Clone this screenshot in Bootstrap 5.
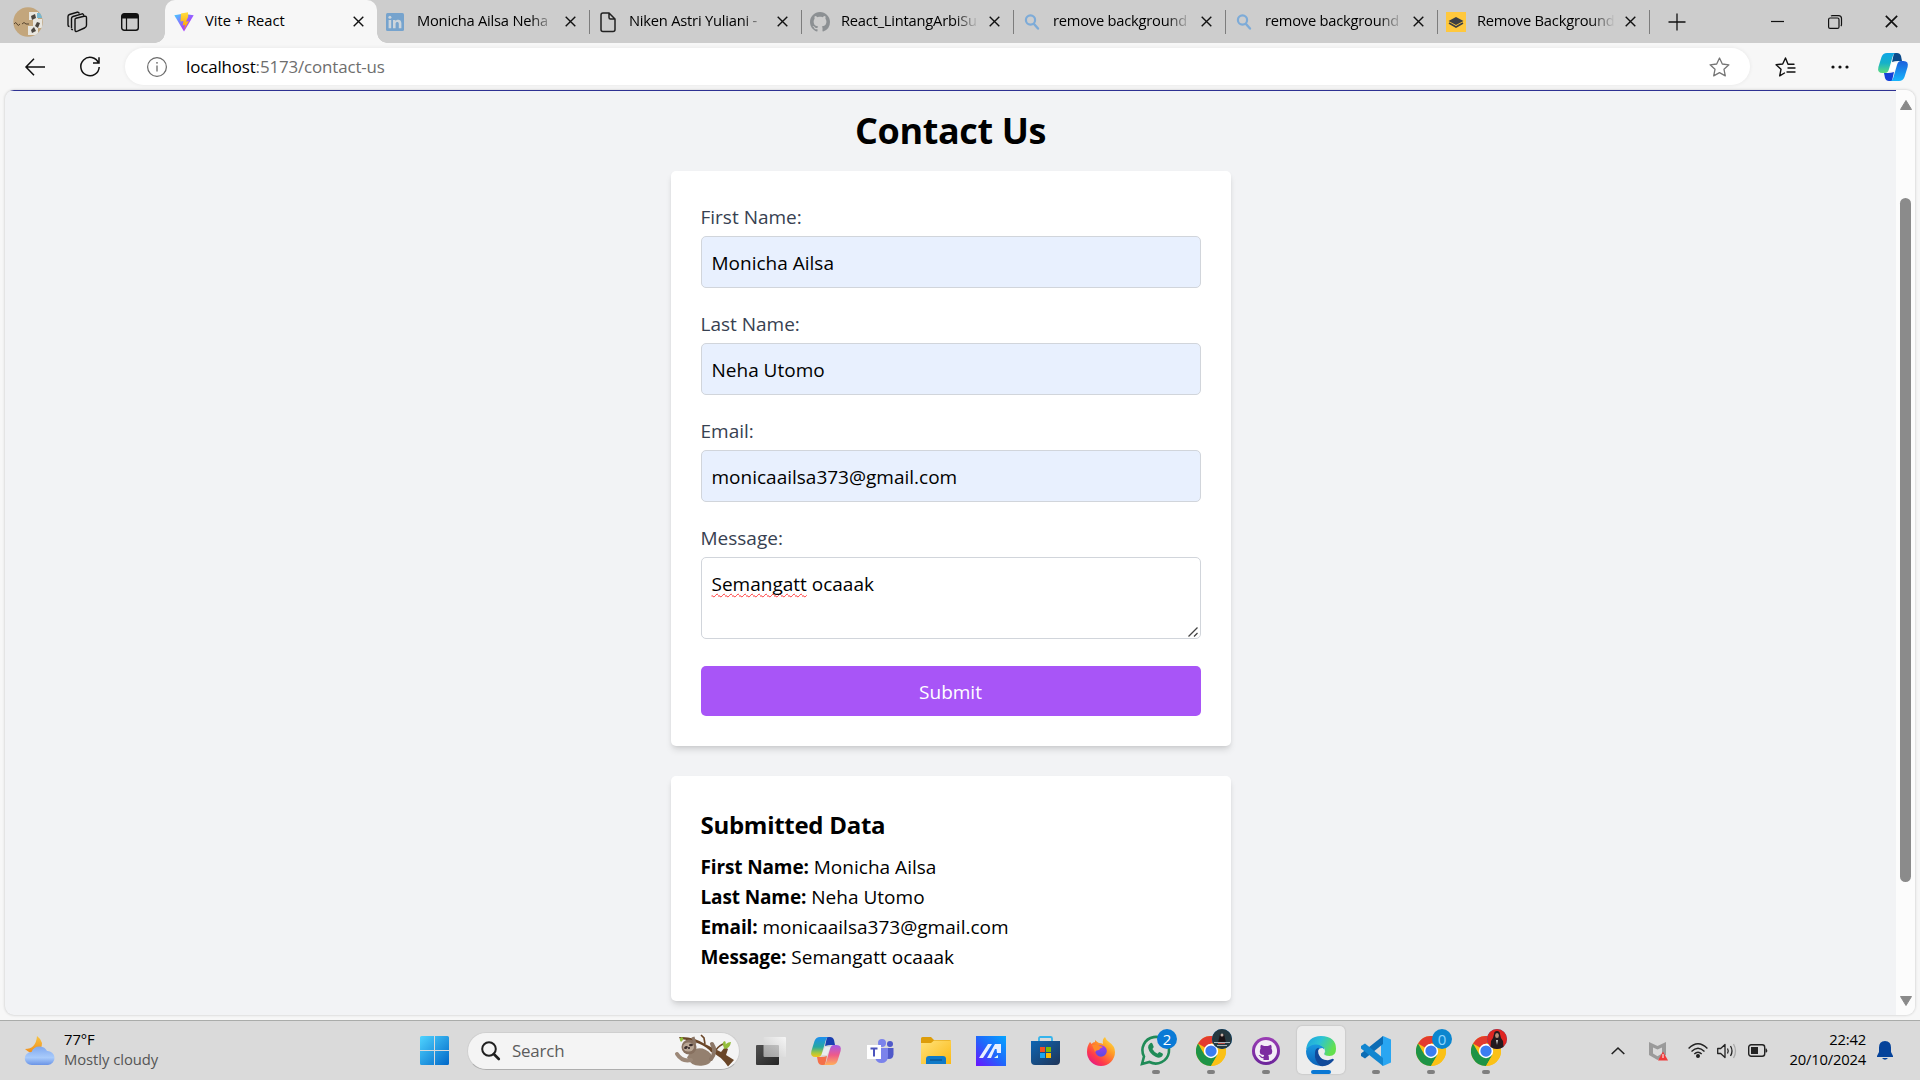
<!DOCTYPE html>
<html lang="en">
<head>
<meta charset="utf-8">
<title>Vite + React</title>
<link href="https://cdn.jsdelivr.net/npm/bootstrap@5.3.0/dist/css/bootstrap.min.css" rel="stylesheet">
<style>
html,body{height:100%;overflow:hidden}
body{width:1920px;height:1080px;background:#f7f7f7;font-family:"Open Sans","Noto Sans",sans-serif;color:#000}
svg{display:block;flex:none;overflow:visible}
.slot{flex:none;display:flex;align-items:center;justify-content:center;position:relative}
.w18{width:18px}.w38{width:38px}.w40{width:40px}.w44{width:44px}.w48{width:48px}.w50{width:50px}.w54{width:54px}.w56{width:56px}.w57{width:57px}.w70{width:70px}
/* tab strip */
.tabstrip{height:43px;background:#cdcdcd;padding-left:3px}
.tabx{width:212px;padding-left:9px;position:relative;flex:none;height:43px}
.tabx .fav{width:20px;margin-right:11px;flex:none}
.tabx .ttl{width:138px;flex:none;overflow:hidden;white-space:nowrap;font-size:14.7px;line-height:22px;letter-spacing:-.22px;margin-top:-4px;-webkit-mask-image:linear-gradient(90deg,#000 82%,transparent 100%)}
.tabx .cls{width:11px;margin-left:10px}
.tabx.live{background:#f7f7f7;border-radius:10px 10px 0 0;margin-left:7px}
.tabx.live .ttl{-webkit-mask-image:none;letter-spacing:0}
.tabx:not(.live):after{content:"";position:absolute;right:-1px;top:10px;height:24px;width:1px;background:#7d7d7d}
.tabx.live:before,.tabx.live + .tabx:before{content:"";position:absolute;bottom:0;width:10px;height:10px;background:radial-gradient(circle at 0 0,transparent 9.5px,#f7f7f7 10px)}
.tabx.live:before{left:-10px}
.tabx.live + .tabx:before{left:0;background:radial-gradient(circle at 100% 0,transparent 9.5px,#f7f7f7 10px)}
/* toolbar */
.toolbar{height:47px;padding-left:7px}
.omni{width:1625px;flex:none;height:37px;border-radius:19px;background:#fff;box-shadow:0 0 4px rgba(0,0,0,.07);margin-left:8px;padding:0 20px 0 22px}
.urltxt{font-size:16.9px;line-height:24px;letter-spacing:-.13px;color:#6e6e6e;margin-left:19px}
.urltxt b{font-weight:400;color:#000}
/* page */
.viewport{margin:0 5px;height:925px;border-radius:9px;background:#f2f3f5;box-shadow:0 0 3px rgba(0,0,0,.22);overflow:hidden}
.pageview{width:1891px;height:925px;border-top:1px solid #2e3192;padding-top:17px}
.sbar{width:19px;background:#fcfcfc;height:925px;padding:10px 0 9px}
.thumb{width:11px;height:684px;border-radius:6px;background:#8b8b8b;margin-top:88px}
h1.head{font-size:36px;line-height:45px;font-weight:700;letter-spacing:-.38px;margin-bottom:18px}
.panel{width:560px;padding:31px 30px 29px;background:#fff;border-radius:5px;box-shadow:0 5px 7px -1px rgba(0,0,0,.11),0 2px 5px -2px rgba(0,0,0,.12)}
.panel + .panel{margin-top:30px}
.panel label,.panel p,.fld{font-size:19px;line-height:30px}
.panel p{letter-spacing:.02px}
.panel strong{letter-spacing:-.13px}
.panel label{color:#374151;margin-bottom:4px;display:block}
.fld{border:1px solid #d1d5db;border-radius:5px;padding:11px 10px 9px;height:52px;width:500px;margin-bottom:21px;color:#000;background:#e8f0fe}
.fld.area{height:82px;background:#fff;margin-bottom:27px;position:relative}
.squig{text-decoration:underline wavy #f33 1px;text-underline-offset:2px;text-decoration-skip-ink:none}
.grip{position:absolute;right:2px;bottom:1px}
.go{width:500px;height:50px;border:0;border-radius:5px;background:#a855f7;color:#fff;font-size:19px;line-height:30px;padding:11px 10px 9px;display:block;margin-bottom:1px}
h2.sub{font-size:24px;line-height:35px;font-weight:700;letter-spacing:-.28px;margin-bottom:10px}
/* taskbar */
.taskbar{height:60px;margin-top:5px;background:#dadada;border-top:1px solid #aaacaa}
.weather{width:412px;padding-left:25px}
.tiny{font-size:14.8px;line-height:20px;letter-spacing:-.05px;margin-top:-4px}
.date{width:86px;letter-spacing:-.2px}
.dim{color:#555}
.pill{width:273px;flex:none;height:38px;border-radius:19px;background:#f4f4f4;border:1px solid #cfcfcf;border-bottom-color:#aeaeae;padding-left:13px;margin-left:11px;margin-right:3px}
.srch{font-size:16.9px;letter-spacing:-.2px;color:#5c5c5c;margin-left:12px}
.app{width:55px;height:59px}
.app.run:after{content:"";position:absolute;bottom:6px;left:23.5px;width:8px;height:4px;border-radius:2px;background:#7f7f7f}
.app.cur:before{content:"";position:absolute;left:3.5px;top:5px;width:48px;height:48px;border-radius:5px;background:#ededed;box-shadow:0 0 2px rgba(0,0,0,.2)}
.app.cur:after{left:17.5px;width:20px;background:#0a78d4}
.app svg{position:relative}
.bdg{position:absolute;left:29px;top:8px;width:20px;height:20px;border-radius:50%;background:#0a7ad6;color:#fff;font-size:15px;line-height:20px;text-align:center;z-index:2}
.bdg.zero{background:#0b86cf;color:#8fd6ff}
</style>
<script src="https://cdn.jsdelivr.net/npm/bootstrap@5.3.0/dist/js/bootstrap.bundle.min.js"></script>
</head>
<body>
<svg width="0" height="0" class="position-absolute"><defs>
<linearGradient id="vb" x1="0" y1="0" x2="1" y2="1"><stop offset="0" stop-color="#41d1ff"/><stop offset=".6" stop-color="#a24bff"/><stop offset="1" stop-color="#bd34fe"/></linearGradient>
<linearGradient id="vy" x1="0" y1="0" x2="0" y2="1"><stop offset="0" stop-color="#ffdf3d"/><stop offset="1" stop-color="#ff9b00"/></linearGradient>
<linearGradient id="cpA" x1="0" y1="0" x2="0" y2="1"><stop offset="0" stop-color="#0ea6e6"/><stop offset=".5" stop-color="#16b1c9"/><stop offset="1" stop-color="#5ddc7c"/></linearGradient>
<linearGradient id="cpB" x1="0" y1="1" x2="0" y2="0"><stop offset="0" stop-color="#1c5fdc"/><stop offset="1" stop-color="#17b5fb"/></linearGradient>
<linearGradient id="cqA" x1="0" y1="0" x2="0" y2="1"><stop offset="0" stop-color="#1d8ff0"/><stop offset=".5" stop-color="#27a8a0"/><stop offset=".8" stop-color="#a9c83c"/><stop offset="1" stop-color="#f5c518"/></linearGradient>
<linearGradient id="cqB" x1="0" y1="1" x2="0" y2="0"><stop offset="0" stop-color="#a65be8"/><stop offset=".5" stop-color="#ee5a8a"/><stop offset="1" stop-color="#ffb05a"/></linearGradient>
<linearGradient id="win" gradientUnits="userSpaceOnUse" x1="0" y1="0" x2="29" y2="29"><stop offset="0" stop-color="#4fd4ff"/><stop offset="1" stop-color="#0067c8"/></linearGradient>
<linearGradient id="cl" x1="0" y1="0" x2="0" y2="1"><stop offset="0" stop-color="#7fa8ef"/><stop offset=".6" stop-color="#a9cbfb"/><stop offset="1" stop-color="#6a94e6"/></linearGradient>
<linearGradient id="mn" x1="0" y1="0" x2="0" y2="1"><stop offset="0" stop-color="#f8c440"/><stop offset="1" stop-color="#ee8a1c"/></linearGradient>
<linearGradient id="fo" x1="0" y1="0" x2="1" y2="1"><stop offset="0" stop-color="#ffe27a"/><stop offset="1" stop-color="#fbb914"/></linearGradient>
<linearGradient id="ma" x1="0" y1="1" x2="1" y2="0"><stop offset="0" stop-color="#6a12ff"/><stop offset=".5" stop-color="#1f68fb"/><stop offset="1" stop-color="#05a5ff"/></linearGradient>
<linearGradient id="st" x1="0" y1="0" x2="1" y2="1"><stop offset="0" stop-color="#0e66b4"/><stop offset="1" stop-color="#1f3558"/></linearGradient>
<linearGradient id="ff" x1="1" y1="0" x2=".2" y2="1"><stop offset="0" stop-color="#fff24a"/><stop offset=".4" stop-color="#ff9a26"/><stop offset=".75" stop-color="#ff3b4a"/><stop offset="1" stop-color="#e3168a"/></linearGradient>
<linearGradient id="fp" x1="0" y1="0" x2="0" y2="1"><stop offset="0" stop-color="#a03df0"/><stop offset="1" stop-color="#5b4be0"/></linearGradient>
<linearGradient id="eg" x1="0" y1="0" x2="1" y2=".4"><stop offset="0" stop-color="#1d9fe0"/><stop offset=".5" stop-color="#2cc3d5"/><stop offset="1" stop-color="#63e04e"/></linearGradient>
<linearGradient id="eb" x1="0" y1="0" x2="0" y2="1"><stop offset="0" stop-color="#1ba0e6"/><stop offset="1" stop-color="#0b62b8"/></linearGradient>
<linearGradient id="gh" x1="0" y1="0" x2="0" y2="1"><stop offset="0" stop-color="#9a3db4"/><stop offset="1" stop-color="#6b249a"/></linearGradient>
<linearGradient id="tv" x1="0" y1="0" x2="1" y2="1"><stop offset="0" stop-color="#505050"/><stop offset="1" stop-color="#252525"/></linearGradient>
<linearGradient id="tw" x1="1" y1="0" x2="0" y2="1"><stop offset="0" stop-color="#fff"/><stop offset="1" stop-color="#c4c4c4"/></linearGradient>
<symbol id="x" viewBox="0 0 11 11"><path d="M.7.7l9.6 9.6M10.3.7L.7 10.3" stroke="#111" stroke-width="1.4" fill="none"/></symbol>
<symbol id="mag" viewBox="0 0 20 20"><circle cx="8.500" cy="8" r="4.600" fill="none" stroke="#7dabd8" stroke-width="2.200"/><path d="M12 12l4 4.500" stroke="#7dabd8" stroke-width="2.400" stroke-linecap="round"/></symbol>
<symbol id="octo" viewBox="0 0 16 16"><path fill-rule="evenodd" d="M8 0C3.58 0 0 3.58 0 8c0 3.54 2.29 6.53 5.47 7.59.4.07.55-.17.55-.38 0-.19-.01-.82-.01-1.49-2.01.37-2.53-.49-2.69-.94-.09-.23-.48-.94-.82-1.13-.28-.15-.68-.52-.01-.53.63-.01 1.08.58 1.23.82.72 1.21 1.87.87 2.33.66.07-.52.28-.87.51-1.07-1.78-.2-3.64-.89-3.64-3.95 0-.87.31-1.59.82-2.15-.08-.2-.36-1.02.08-2.12 0 0 .67-.21 2.2.82.64-.18 1.32-.27 2-.27s1.36.09 2 .27c1.53-1.04 2.2-.82 2.2-.82.44 1.1.16 1.92.08 2.12.51.56.82 1.27.82 2.15 0 3.07-1.87 3.75-3.65 3.95.29.25.54.73.54 1.48 0 1.07-.01 1.93-.01 2.2 0 .21.15.46.55.38A8.01 8.01 0 0 0 16 8c0-4.42-3.58-8-8-8z"/></symbol>
<symbol id="chrome" viewBox="0 0 48 48"><circle cx="24" cy="24" r="24" fill="#fbc116"/><path d="M24 24L3.200 12A24 24 0 0 1 44.800 12H24z" fill="#e33b2e"/><path d="M3.200 12A24 24 0 0 0 24 48L34.400 30 24 24 13.600 30z" fill="#1e9446"/><path d="M44.800 12H24v12l10.400 6L24 48A24 24 0 0 0 44.800 12z" fill="#fbc116"/><circle cx="24" cy="24" r="11.500" fill="#fff"/><circle cx="24" cy="24" r="9" fill="#3b7df0"/></symbol>
<path id="ribbonL" d="M9 0h9q-2.500 0-3.500 4L11 16q-1 4-4 4H4.500Q-1 20 .4 14L3.500 4Q5 0 9 0z"/>
</defs></svg>

<div class="d-flex flex-column h-100">
 <div class="tabstrip d-flex align-items-center flex-shrink-0">
  <div class="slot w50"><svg width="30" height="30" viewBox="0 0 30 30"><clipPath id="av"><circle cx="15" cy="15" r="14.700"/></clipPath><g clip-path="url(#av)"><path fill="#c3a67c" d="M0 0h30v30H0z"/><path fill="#e8e6df" d="M16 5h9v8h-9zM20 12h9v9h-9zM15 19h10v9H15z"/><path fill="#4c463f" d="M18 9l4-2 1 4-4 2zM24 15l3 1-2 5-3-2zM18 23l3-3 2 4-4 2z"/><path fill="#78b7d0" d="M24 6h5v5h-5z"/><path d="M1 17q2-3 3 0t3 0M9 17q2-3 4 0h3" stroke="#59452f" fill="none"/></g></svg></div>
  <div class="slot w48"><svg width="22" height="22" viewBox="0 0 22 22" fill="none" stroke="#111" stroke-width="1.400" stroke-linejoin="round"><path d="M9 8.500q0-1 1-1.200l8-2q2.500-.5 2.500 1.500v7.500q0 2-2 2.700l-7 3.200q-2.500 1-2.500-1.500zM5.500 17V7.500q0-1.500 1.500-2l10-2.800M2 14V5.500q0-1.500 1.500-2L12 1"/><path d="M5.500 17.500q0 1.500 1.500 1M2 14q0 1.500 1.500 1.500M17 2.700l1 2M12 1l1.500 1.500"/></svg></div>
  <div class="slot w57"><svg width="18" height="18" viewBox="0 0 18 18"><rect x=".7" y=".7" width="16.600" height="16.600" rx="2.500" fill="none" stroke="#111" stroke-width="1.400"/><path d="M1 1h16v4.500H1z" fill="#111"/><path d="M5.500 5v12" stroke="#111" stroke-width="1.200"/></svg></div>
  <div class="tabx live d-flex align-items-center"><div class="fav"><svg width="20" height="20" viewBox="0 0 20 20"><path d="M.3 3.200L9 1.800l10.700 1.400L10 19.600z" fill="url(#vb)"/><path d="M14 .3L7 1.600l-.5 8 3-.6-.8 4.500 2.500-.8-1.200 5L15 9l-3 .7 2.200-5z" fill="url(#vy)"/></svg></div><div class="ttl">Vite + React</div><svg class="cls" width="11" height="11"><use href="#x"/></svg></div>
  <div class="tabx d-flex align-items-center"><div class="fav"><svg width="18" height="18" viewBox="0 0 18 18"><rect width="18" height="18" rx="1.500" fill="#76a3cd"/><path d="M2.600 7h2.600v8.300H2.600zM7 7h2.500v1.200C10.800 6.200 15.400 6 15.400 10.300v5h-2.600v-4.500c0-2.500-3.200-2.300-3.200 0v4.500H7z" fill="#cdd5dc"/><circle cx="3.900" cy="4.200" r="1.500" fill="#cdd5dc"/></svg></div><div class="ttl">Monicha Ailsa Neha</div><svg class="cls" width="11" height="11"><use href="#x"/></svg></div>
  <div class="tabx d-flex align-items-center"><div class="fav"><svg width="20" height="20" viewBox="0 0 20 20"><path d="M3 3Q3 1 5 1h6l6 6v10.500q0 2-2 2H5q-2 0-2-2zM11 1v4.500Q11 7 12.500 7H17" fill="none" stroke="#222" stroke-width="1.500"/></svg></div><div class="ttl">Niken Astri Yuliani -</div><svg class="cls" width="11" height="11"><use href="#x"/></svg></div>
  <div class="tabx d-flex align-items-center"><div class="fav"><svg width="20" height="20" fill="#8c9093"><use href="#octo"/></svg></div><div class="ttl">React_LintangArbiSu</div><svg class="cls" width="11" height="11"><use href="#x"/></svg></div>
  <div class="tabx d-flex align-items-center"><div class="fav"><svg width="20" height="20"><use href="#mag"/></svg></div><div class="ttl">remove background</div><svg class="cls" width="11" height="11"><use href="#x"/></svg></div>
  <div class="tabx d-flex align-items-center"><div class="fav"><svg width="20" height="20"><use href="#mag"/></svg></div><div class="ttl">remove background</div><svg class="cls" width="11" height="11"><use href="#x"/></svg></div>
  <div class="tabx d-flex align-items-center"><div class="fav"><svg width="20" height="20" viewBox="0 0 20 20"><path fill="#ffc83d" d="M0 0h20v20H0z"/><path fill="#3c3f44" d="M10 5l7.500 4-7.500 4-7.500-4z"/><path d="M3 11l7 4 7-4" fill="none" stroke="#3c3f44" stroke-width="1.600"/></svg></div><div class="ttl">Remove Background</div><svg class="cls" width="11" height="11"><use href="#x"/></svg></div>
  <div class="slot w56"><svg width="18" height="18" viewBox="0 0 18 18"><path d="M9 .5v17M.5 9h17" stroke="#111" stroke-width="1.300"/></svg></div>
  <div class="slot ms-auto w57"><svg width="13" height="13"><path d="M0 6.500h13" stroke="#111" stroke-width="1.200"/></svg></div>
  <div class="slot w57"><svg width="14" height="14" viewBox="0 0 14 14" fill="none" stroke="#111" stroke-width="1.200"><rect x=".6" y="3" width="10.400" height="10.400" rx="1.500"/><path d="M3 1q.5-.4 1.500-.4h6q3 0 3 3v6q0 1-.6 1.500"/></svg></div>
  <div class="slot w57"><svg width="13" height="13"><use href="#x"/></svg></div>
 </div>
 <div class="toolbar d-flex align-items-center flex-shrink-0">
  <div class="slot w56"><svg width="20" height="18" viewBox="0 0 20 18" fill="none" stroke="#111" stroke-width="1.500"><path d="M20 9H1M9 .8L1 9l8 8.200"/></svg></div>
  <div class="slot w54"><svg width="20" height="20" viewBox="0 0 20 20" fill="none" stroke="#111" stroke-width="1.500"><path d="M18.500 6A9.200 9.200 0 1 0 19.200 10M19 .3V6h-6"/></svg></div>
  <div class="omni d-flex align-items-center"><svg width="20" height="20" viewBox="0 0 20 20"><circle cx="10" cy="10" r="9.400" fill="none" stroke="#6a6a6a" stroke-width="1.200"/><path d="M10 8.500v6" stroke="#6a6a6a" stroke-width="1.300"/><circle cx="10" cy="5.800" r=".9" fill="#6a6a6a"/></svg><div class="urltxt"><b>localhost</b>:5173/contact-us</div>
   <svg class="ms-auto" width="21" height="20" viewBox="0 0 21 20"><path d="M10.500 1l2.800 6 6.600.8-4.900 4.500 1.300 6.600-5.800-3.300-5.800 3.300 1.300-6.600L1.100 7.800 7.700 7z" fill="none" stroke="#767676" stroke-width="1.300" stroke-linejoin="round"/></svg></div>
  <div class="slot w70"><svg width="21" height="20" viewBox="0 0 21 20"><path d="M19 7.200h-6L10.500 1 7.700 7l-6.600.8L6 12.300l-1.300 6.600L9.500 16M13 11h7M12 15h8" fill="none" stroke="#111" stroke-width="1.400" stroke-linejoin="round" stroke-linecap="round"/></svg></div>
  <div class="slot w40"><svg width="18" height="4" fill="#111"><circle cx="2" cy="2" r="1.600"/><circle cx="9" cy="2" r="1.600"/><circle cx="16" cy="2" r="1.600"/></svg></div>
  <div class="slot ms-auto me-2 w38"><svg width="30" height="28" viewBox="0 0 30 28"><path d="M14 10h6l-4 8h-6z" fill="#fff"/><path d="M16 0h3q3 0 4 3l1 5h-4q-3 0-6 1z" fill="#0a4a8a"/><path d="M14 28h-3q-3 0-4-3l-1-5h4q3 0 6-1z" fill="#1440d8"/><use href="#ribbonL" fill="url(#cpA)"/><use href="#ribbonL" fill="url(#cpB)" transform="rotate(180 15 14)"/></svg></div>
 </div>
 <div class="viewport d-flex flex-shrink-0">
  <main class="pageview d-flex flex-column align-items-center">
   <h1 class="head">Contact Us</h1>
   <form class="panel">
    <label>First Name:</label><div class="fld">Monicha Ailsa</div>
    <label>Last Name:</label><div class="fld">Neha Utomo</div>
    <label>Email:</label><div class="fld">monicaailsa373@gmail.com</div>
    <label>Message:</label><div class="fld area"><span class="squig">Semangatt</span> ocaaak<svg class="grip" width="10" height="10" viewBox="0 0 10 10"><path d="M.5 9.500l9-9M6 9.500L9.500 6" stroke="#444" stroke-width="1.300"/></svg></div>
    <button type="button" class="go">Submit</button>
   </form>
   <section class="panel">
    <h2 class="sub">Submitted Data</h2>
    <p class="mb-0"><strong>First Name:</strong> Monicha Ailsa</p>
    <p class="mb-0"><strong>Last Name:</strong> Neha Utomo</p>
    <p class="mb-0"><strong>Email:</strong> monicaailsa373@gmail.com</p>
    <p class="mb-0"><strong>Message:</strong> Semangatt ocaaak</p>
   </section>
  </main>
  <div class="sbar d-flex flex-column align-items-center"><svg width="12" height="10"><path d="M6 .5L11.500 9.500H.5z" fill="#8a8a8a" stroke="#8a8a8a" stroke-linejoin="round"/></svg><div class="thumb"></div><svg class="mt-auto" width="12" height="10"><path d="M6 9.500L11.500.5H.5z" fill="#8a8a8a" stroke="#8a8a8a" stroke-linejoin="round"/></svg></div>
 </div>
 <div class="taskbar d-flex align-items-center flex-shrink-0">
  <div class="weather d-flex align-items-center"><svg width="31" height="30" viewBox="0 0 31 30"><path d="M12 0q8 6 3 14t-15-1q11 0 12-13z" fill="url(#mn)"/><path d="M7 29a7 6.500 0 0 1-.5-13Q9 10 15 10.500q5 .3 7 4.500a7 7 0 1 1 1 14z" fill="url(#cl)"/></svg><div class="tiny ms-2"><div>77°F</div><div class="dim">Mostly cloudy</div></div></div>
  <div class="slot w44"><svg width="29" height="29" viewBox="0 0 29 29" fill="url(#win)"><path d="M0 1.500Q0 0 1.500 0H14v14H0zM15 0h12.500Q29 0 29 1.500V14H15zM0 15h14v14H1.500Q0 29 0 27.500zM15 15h14v12.500q0 1.500-1.500 1.500H15z"/></svg></div>
  <div class="pill d-flex align-items-center"><svg width="19" height="19" viewBox="0 0 19 19" fill="none" stroke="#1f1f1f" stroke-width="2"><circle cx="8" cy="8" r="6.800"/><path d="M12.800 13l5 5" stroke-width="2.600" stroke-linecap="round"/></svg><div class="srch">Search</div>
   <svg class="ms-auto me-1" width="60" height="33" viewBox="0 0 60 33"><path d="M4 3q14-1 26 7l16 8 4-5 3 2-2 6 8 5-6 6.500Q46 22 36 18 28 8 5 5z" fill="#6a4628"/><path d="M26 1l3 3 1 6M40 18q2-5 8-8" stroke="#6a4628" stroke-width="1.600" fill="none"/><path d="M49 14q-3-6 1-7 2 3-1 7zM49 15q1-7 7-7-1 7-7 7zM6 8q-3-4 1-5 3 2-1 5z" fill="#93bd3a"/><path d="M17 16Q28 11 36 20q3 10-8 11.500-12 1.500-16-8z" fill="#94806f"/><path d="M36 25q6-8 1-15" stroke="#8b7666" stroke-width="4" fill="none" stroke-linecap="round"/><path d="M2 20q5 8 14 6" stroke="#9c8878" stroke-width="4" fill="none" stroke-linecap="round"/><circle cx="14" cy="13" r="7.500" fill="#87705f"/><ellipse cx="13.500" cy="13" rx="5.500" ry="4.500" fill="#b9a796"/><ellipse cx="11" cy="13.500" rx="2" ry="1.300" transform="rotate(-30 11 13.500)" fill="#3a2d2b"/><ellipse cx="16" cy="11" rx="2" ry="1.300" transform="rotate(-10 16 11)" fill="#3a2d2b"/><circle cx="14" cy="14" r="1" fill="#2a2020"/><path d="M18 3l2 7" stroke="#8b7666" stroke-width="3"/></svg></div>
  <div class="slot app"><svg width="30" height="28" viewBox="0 0 30 28"><rect y="8" width="23" height="20" rx="1" fill="url(#tv)"/><rect x="7.500" width="22.500" height="20" rx="1" fill="url(#tw)" opacity=".75"/></svg></div>
  <div class="slot app"><svg width="30" height="28" viewBox="0 0 30 28"><path d="M14 10h6l-4 8h-6z" fill="#e9ecee"/><path d="M16 0h3q3 0 4 3l1 5h-4q-3 0-6 1z" fill="#1a3fb0"/><path d="M14 28h-3q-3 0-4-3l-1-5h4q3 0 6-1z" fill="#f4704a"/><use href="#ribbonL" fill="url(#cqA)"/><use href="#ribbonL" fill="url(#cqB)" transform="rotate(180 15 14)"/></svg></div>
  <div class="slot app"><svg width="27" height="24" viewBox="0 0 27 24"><circle cx="15" cy="4" r="4" fill="#7b83eb"/><circle cx="23" cy="5" r="3" fill="#5059c9"/><path d="M18 9h8.500v6.500Q26 20 22 20t-4-4z" fill="#5059c9"/><path d="M8 9h13v9q-1 6-6.500 6T8 18z" fill="#7b83eb"/><rect y="6" width="14" height="14" fill="#fff"/><path d="M3.500 9.500h7M7 9.500v8" stroke="#4b53bc" stroke-width="2"/></svg></div>
  <div class="slot app"><svg width="30" height="27" viewBox="0 0 30 27"><path d="M0 1.500Q0 0 1.500 0H10l3 3h15.500Q30 3 30 4.500V12H0z" fill="#dd9d0a"/><path d="M0 6h10l3-2.500h17V27H0z" fill="url(#fo)"/><path d="M5 27v-5q0-3 3-3h14q3 0 3 3v5z" fill="#0f7ac8"/><path d="M9 23h12" stroke="#0a4f8c" stroke-width="1.200"/></svg></div>
  <div class="slot app"><svg width="30" height="30" viewBox="0 0 30 30"><path fill="url(#ma)" d="M0 0h30v30H0z"/><path d="M3 22L12 8h4L7 22zM11 22l8-14h5l-3 5h-2l-4 9zM20 8h5v9h-4z" fill="#e8f0ff"/><path d="M18 22h4v-3z" fill="#dfe"/></svg></div>
  <div class="slot app"><svg width="29" height="30" viewBox="0 0 29 30"><path d="M8 6V2.500Q8 1 9.500 1h10Q21 1 21 2.500V6" fill="none" stroke="#35b4ec" stroke-width="1.800"/><path d="M0 5h29v20q0 4-4 4H4q-4 0-4-4z" fill="url(#st)"/><path fill="#f25022" d="M9 11h5v5H9z"/><path fill="#7fba00" d="M15 11h5v5h-5z"/><path fill="#1aa5ef" d="M9 17h5v5H9z"/><path fill="#ffb900" d="M15 17h5v5h-5z"/></svg></div>
  <div class="slot app"><svg width="28" height="28" viewBox="0 0 28 28"><path d="M3 5q1 1 1.500 2Q6 5 8 5V3q2 2 4 3 3 0 4 1-1-5 2-7 1 3 4 5 6 4 6 10a13.500 13.500 0 0 1-28 0Q0 9 3 5z" fill="url(#ff)"/><circle cx="14" cy="14" r="5.800" fill="url(#fp)"/><path d="M5 8q4-1 7 1 3 0 4 1-3 1-4 3-3 0-4 2z" fill="#ff8a2a"/></svg></div>
  <div class="slot app run"><svg width="31" height="31" viewBox="0 0 31 31"><path d="M2 29l2-7.500A13.300 13.300 0 1 1 9.500 27z" fill="none" stroke="#1f8b57" stroke-width="2.600"/><path d="M10 8.500q1.500-1.500 2.500.2l1.200 3q0 1-1.300 2.300 2 3.600 5.200 4.800 1-1.700 2-1.800l3 1.600q1 1-.6 3-2.500 2.200-6.500.2-6-3-7.400-9-.3-2.600 1.900-4.300z" fill="#1f8b57"/></svg><div class="bdg">2</div></div>
  <div class="slot app run"><svg width="30" height="30"><use href="#chrome"/></svg><div class="bdg"><svg width="20" height="20" viewBox="0 0 20 20"><circle cx="10" cy="10" r="10" fill="#25383f"/><path d="M8 5h4l2 9H6z" fill="#1a1215"/><circle cx="10" cy="6" r="1.500" fill="#c9b5ab"/><path d="M2 13.500h16M5 16.500h10" stroke="#aab6bb" stroke-width="1"/><path d="M6 14.500h7" stroke="#b84a42"/></svg></div></div>
  <div class="slot app run"><svg width="28" height="28" viewBox="0 0 28 28"><circle cx="14" cy="14" r="14" fill="url(#gh)"/><circle cx="14" cy="14" r="11" fill="#f3edf6"/><svg x="4" y="4" width="20" height="20" viewBox="0 0 16 16" fill="#7c2ba0"><path d="M4 3l2.500 1h3L12 3q.8 1.500.3 2.800 2.200 5-2.500 5.400.7.800.5 4H6v-1.500q-2 .3-3-1.500l-1-1q1.500-.4 2.500 1.200.7.600 1.500.2l.5-1.400Q1.500 11 3.700 5.800 3.200 4.500 4 3z"/></svg></svg></div>
  <div class="slot app run cur"><svg width="30" height="30" viewBox="0 0 30 30"><path d="M0 15Q1 7 9 6l9 5 1 12 5 4Q20 30 15 30A15 15 0 0 1 0 15z" fill="url(#eb)"/><path d="M11.500 15Q13 12 16.500 12 19.500 14 18.700 16.500 17.500 18.500 20 20 24 21.500 28 19.500L27 24Q22 26 17 24 12 21 11.500 15z" fill="#ededed"/><path d="M0 14Q1.500 0 15 0 30 .5 30 13 30 20 23.500 20 18.500 20 18.500 17.500 20 15 18 12 14.500 8 9 8.500 3 9 0 14z" fill="url(#eg)"/><path d="M9 17Q9 12 13 11.800 11.500 15 12.500 18 15 24.500 22 24.200 25 23.500 26.500 22.700 28.500 22.700 27.500 24.500 22 31 14.500 30 8 25 9 17z" fill="#114a9b"/></svg></div>
  <div class="slot app run"><svg width="30" height="30" viewBox="0 0 30 30"><path d="M22 0l8 3.500v23L22 30l-2-3V3z" fill="#29a6f2"/><path d="M22 0v8L4 22.500 0 20v-2.500z" fill="#0c6cb4"/><path d="M22 30v-8L4 7.500 0 10v2.500z" fill="#1286d0"/></svg></div>
  <div class="slot app run"><svg width="30" height="30"><use href="#chrome"/></svg><div class="bdg zero">0</div></div>
  <div class="slot app run"><svg width="30" height="30"><use href="#chrome"/></svg><div class="bdg"><svg width="20" height="20" viewBox="0 0 20 20"><circle cx="10" cy="10" r="10" fill="#df2522"/><path d="M7.500 3q2.500-2 5 0l1.500 6 2 3 .5 6q-6.500 4-13 0l.5-6L6 9z" fill="#241a1e"/><ellipse cx="10" cy="6.500" rx="1.900" ry="2.500" fill="#b98d78"/><path d="M9 11h2l-1 5z" fill="#ccc"/></svg></div></div>
  <div class="slot ms-auto w40"><svg width="14" height="8"><path d="M.7 7L7 1l6.300 6" fill="none" stroke="#222" stroke-width="1.600"/></svg></div>
  <div class="slot w40"><svg width="18" height="20" viewBox="0 0 18 20"><path d="M0 1l8.500 4L17 1v13l-8.500 5L0 14zM4 6.500v6l4.500 2.700L13 12.500v-6l-4.500 2z" fill="#9a9a9a" fill-rule="evenodd"/><path d="M14 10.500l5 9H9z" fill="#f03a3a"/><path d="M14 13v4" stroke="#fff"/></svg></div>
  <div class="slot w40"><svg width="20" height="15" viewBox="0 0 20 15" fill="none" stroke="#222" stroke-width="1.400"><path d="M.6 5.500q9.400-9.500 18.800 0M3.500 8.500q6.500-6.500 13 0M6.300 11q3.700-3.500 7.400 0"/><circle cx="10" cy="13" r="1.300" fill="#222"/></svg></div>
  <div class="slot w18"><svg width="20" height="16" viewBox="0 0 20 16" fill="none" stroke="#222" stroke-width="1.300"><path d="M.7 5.500h3L8 1.500v13l-4.300-4h-3z" stroke-linejoin="round"/><path d="M10.500 5.500q1.500 2.500 0 5M13.500 3q3 5 0 10"/><path d="M16.500 1q4 7 0 14" stroke="#aaa"/></svg></div>
  <div class="slot w44"><svg width="20" height="13" viewBox="0 0 20 13"><rect x=".7" y=".7" width="16" height="11.600" rx="2.500" fill="none" stroke="#222" stroke-width="1.400"/><rect x="3" y="3" width="7" height="7" fill="#222"/><path d="M17.500 4.500h1q1.500 2 0 4h-1z" fill="#222"/></svg></div>
  <div class="tiny text-end date"><div>22:42</div><div>20/10/2024</div></div>
  <div class="slot w38 me-3"><svg width="16" height="19" viewBox="0 0 16 19" fill="#06439a"><path d="M8 0q6 .3 6 6.500V11l2 4v1H0v-1l2-4V6.500Q2 .3 8 0zM5 17h6q-3 3.500-6 0z"/></svg></div>
 </div>
</div>
</body>
</html>
